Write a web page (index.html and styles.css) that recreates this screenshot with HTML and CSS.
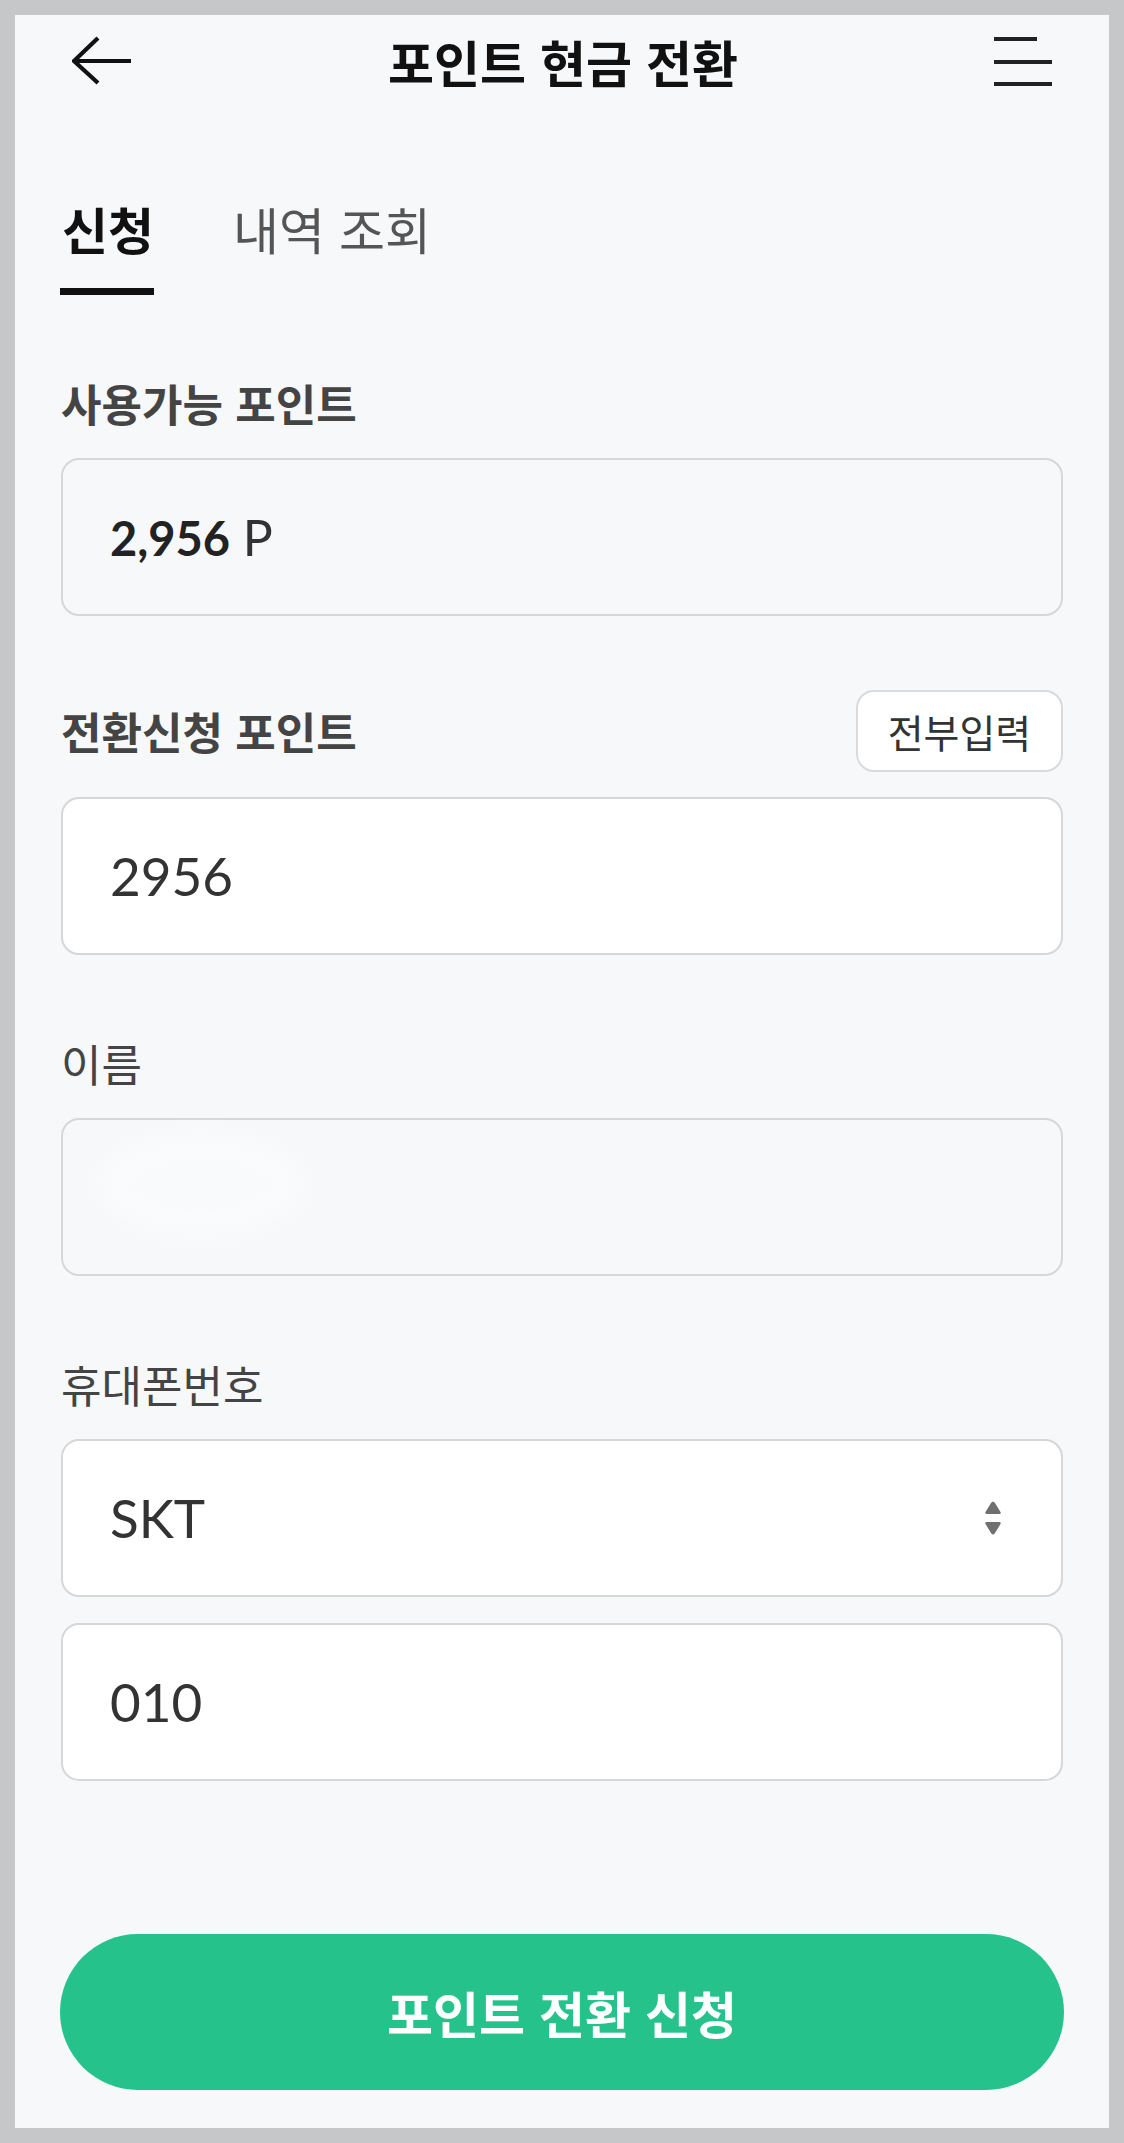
FILE: index.html
```html
<!DOCTYPE html>
<html lang="ko">
<head>
<meta charset="utf-8">
<title>포인트 현금 전환</title>
<link rel="stylesheet" href="styles.css">
</head>
<body>
<div class="screen">
  <header class="topbar">
    <button class="icon-btn" aria-label="뒤로">
      <svg width="60" height="50" viewBox="0 0 60 50"><path d="M26 2 L2 25 L26 47 M2 25 H59" fill="none" stroke="#111" stroke-width="4.2" stroke-linecap="butt" stroke-linejoin="miter"/></svg>
    </button>
    <h1 class="title">포인트 현금 전환</h1>
    <button class="icon-btn" aria-label="메뉴">
      <svg width="58" height="50" viewBox="0 0 58 50"><g stroke="#222" stroke-width="4"><line x1="0" y1="3" x2="43" y2="3"/><line x1="0" y1="26" x2="58" y2="26"/><line x1="0" y1="48" x2="58" y2="48"/></g></svg>
    </button>
  </header>

  <main class="content">
    <nav class="tabs">
      <a class="tab tab--active">신청</a>
      <a class="tab">내역 조회</a>
    </nav>

    <section class="field">
      <div class="label-row"><span class="label label--bold">사용가능 포인트</span></div>
      <div class="box box--readonly"><span class="amount"><b>2,956</b> P</span></div>
    </section>

    <section class="field field--action">
      <div class="label-row">
        <span class="label label--bold">전환신청 포인트</span>
        <button class="small-btn">전부입력</button>
      </div>
      <div class="box"><span class="value">2956</span></div>
    </section>

    <section class="field">
      <div class="label-row"><span class="label">이름</span></div>
      <div class="box box--readonly"><span class="mask"></span></div>
    </section>

    <section class="field">
      <div class="label-row"><span class="label">휴대폰번호</span></div>
      <div class="box box--select">
        <span class="value">SKT</span>
        <svg class="updown" width="18" height="36" viewBox="0 0 18 36"><path d="M9 1.5 Q10 1.5 11 3 L16.5 12 Q17.5 14 15 14 H3 Q0.5 14 1.5 12 L7 3 Q8 1.5 9 1.5Z M9 34.5 Q10 34.5 11 33 L16.5 24 Q17.5 22 15 22 H3 Q0.5 22 1.5 24 L7 33 Q8 34.5 9 34.5Z" fill="#6f7072"/></svg>
      </div>
      <div class="box box--stack"><span class="value">010</span></div>
    </section>

    <button class="submit">포인트 전환 신청</button>
  </main>
</div>
</body>
</html>
```

FILE: styles.css
```css
* { box-sizing: border-box; }

html, body {
  margin: 0;
  padding: 0;
  background: #c6c7c9;
}

body {
  font-family: "Lato", "Noto Sans CJK KR", "Noto Sans", sans-serif;
  color: #333;
  padding: 15px;
}

.screen {
  background: #f7f8fa;
  height: 2113px;
  display: flex;
  flex-direction: column;
}

.topbar {
  height: 92px;
  padding: 0 57px;
  display: flex;
  align-items: center;
  justify-content: space-between;
}

.icon-btn {
  border: 0;
  background: transparent;
  padding: 0;
  display: flex;
  align-items: center;
}

.title {
  margin: 0;
  font-family: "Noto Sans CJK KR", sans-serif;
  font-size: 50px;
  line-height: 72px;
  font-weight: 700;
  color: #111;
}

.content {
  padding: 0 46px;
  display: flex;
  flex-direction: column;
}

.tabs {
  display: flex;
  gap: 79px;
  margin-top: 91px;
}

.tab {
  font-family: "Noto Sans CJK KR", sans-serif;
  font-size: 50px;
  line-height: 60px;
  color: #555;
  padding: 0 0 30px;
  border-bottom: 7px solid transparent;
  white-space: nowrap;
}

.tab--active {
  font-weight: 700;
  color: #111;
  border-bottom-color: #111;
  padding: 0 0 30px 2px;
  margin-left: -1px;
  width: 94px;
}

.field {
  margin-top: 78px;
}

.field--action {
  margin-top: 74px;
}

.label-row {
  height: 60px;
  display: flex;
  align-items: center;
  justify-content: space-between;
  margin-bottom: 25px;
}

.field--action .label-row {
  height: 82px;
}

.label {
  font-family: "Noto Sans CJK KR", sans-serif;
  font-size: 44px;
  line-height: 1.2;
  color: #444;
}

.label--bold {
  font-weight: 700;
}

.small-btn {
  height: 82px;
  width: 207px;
  border: 2px solid #d9dadc;
  border-radius: 18px;
  background: #fff;
  font-family: "Noto Sans CJK KR", sans-serif;
  font-size: 39px;
  line-height: 1.2;
  color: #333;
  padding: 0;
}

.box {
  height: 158px;
  border: 2px solid #d6d7d9;
  border-radius: 18px;
  background: #fff;
  display: flex;
  align-items: center;
  padding: 0 47px;
}

.box--readonly {
  background: #f7f8fa;
}

.box--select {
  justify-content: space-between;
  padding-right: 59px;
}

.box--stack {
  margin-top: 26px;
}

.amount {
  font-size: 50px;
  line-height: 1.2;
  color: #333;
}

.amount b {
  font-size: 47px;
  font-weight: 700;
  color: #222;
}

.value {
  font-size: 53px;
  line-height: 1.2;
  color: #333;
}

.mask {
  width: 205px;
  height: 105px;
  margin-left: -12px;
  margin-top: -26px;
  background: #fff;
  border-radius: 50%;
  filter: blur(10px);
  opacity: 0.35;
}

.submit {
  margin-top: 153px;
  height: 156px;
  border: 0;
  border-radius: 78px;
  background: #25c28b;
  color: #fff;
  font-family: "Noto Sans CJK KR", sans-serif;
  font-size: 50px;
  line-height: 1.2;
  font-weight: 700;
  margin-left: -1px;
  margin-right: -1px;
}
```
